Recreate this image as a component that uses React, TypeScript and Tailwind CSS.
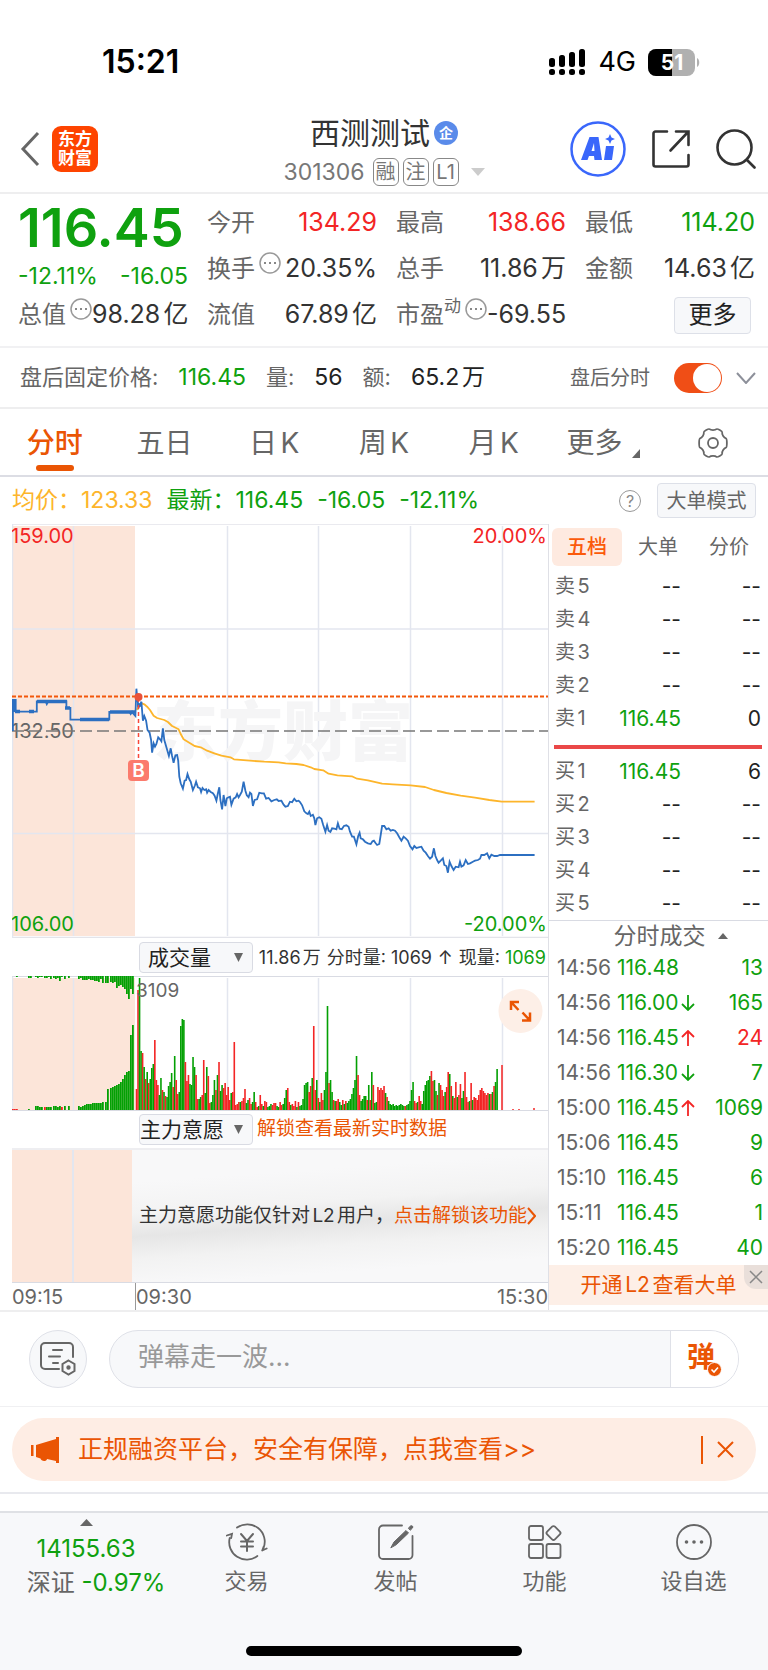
import { useState } from "react";

const GREEN = "#0fa10f";
const RED = "#f32525";

// price samples: x,y pairs
const priceLine =
    "36,663 36,570 44,570 44,605 103,605 103,574 128,574 131,582 135,574 186,574 186,594 197,594 197,629 306,629 306,606 363,606 366,612 370,605 374,612 379,618 382,536 384,560 388,592 392,585 396,575 400,632 404,618 409,632 413,660 419,668 423,690 426,728 430,700 434,710 438,702 443,682 448,688 452,694 456,655 460,690 466,712 473,738 478,715 482,738 486,758 491,736 496,735 499,752 502,800 506,820 512,836 517,812 521,810 525,792 530,808 534,815 540,840 546,826 549,815 554,832 560,835 563,846 567,834 572,840 577,838 580,848 584,840 590,846 596,850 601,857 606,872 610,850 614,832 617,870 622,898 626,855 631,888 635,865 640,862 644,860 648,884 654,866 660,862 664,852 668,862 672,855 677,845 682,815 687,842 691,856 696,862 700,848 704,852 708,888 713,870 720,868 726,848 733,850 739,850 745,866 752,864 760,874 768,870 775,868 780,873 788,872 794,884 799,890 806,888 812,875 818,877 824,866 830,874 836,872 840,876 846,886 852,904 858,910 862,912 866,905 870,918 876,914 880,925 883,945 888,925 894,922 900,926 905,945 911,965 916,945 920,962 925,966 930,955 936,956 942,958 946,940 951,956 957,958 963,948 970,946 976,950 980,965 986,980 991,980 998,1003 1003,978 1007,968 1010,985 1016,988 1022,995 1030,1000 1038,1002 1043,994 1047,992 1052,1000 1056,1005 1062,1002 1066,975 1070,948 1076,948 1082,958 1088,955 1094,962 1100,960 1106,962 1112,970 1118,982 1124,992 1130,980 1136,985 1142,992 1148,1008 1155,1018 1160,1008 1166,1014 1172,1012 1180,1010 1186,1022 1192,1028 1198,1038 1204,1046 1210,1040 1215,1015 1219,1038 1224,1050 1228,1058 1234,1052 1240,1045 1244,1065 1250,1068 1254,1088 1259,1055 1264,1068 1270,1080 1276,1070 1284,1072 1288,1055 1292,1070 1298,1066 1304,1050 1310,1062 1316,1060 1324,1055 1330,1052 1338,1050 1344,1046 1348,1035 1356,1035 1364,1030 1370,1045 1376,1034 1384,1038 1392,1038 1400,1035 1497,1035";

const averageLine =
    "384,600 388,585 397,580 404,583 412,590 420,600 430,617 440,624 460,630 470,636 482,648 500,658 506,672 514,688 530,698 545,708 562,712 580,722 600,730 620,737 645,742 655,748 700,752 740,755 780,757 800,760 830,762 850,765 870,772 880,777 905,781 920,791 945,796 985,799 1000,806 1030,811 1070,821 1100,823 1150,826 1190,831 1215,840 1250,849 1290,857 1330,863 1370,870 1405,875 1497,875";

const toPoints = (raw: string) =>
    raw
        .split(" ")
        .map((p) => {
            const [x, y] = p.split(",").map(Number);
            return `${(x / 2.8 - 12).toFixed(1)},${(y / 3 - 14).toFixed(1)}`;
        })
        .join(" ");

// volume per minute, negative = drawn in red
const volumes = [
    -21, -120, 132, 59, -57, 43, -31, 38, -27, 31, 42, 46, -70, -30, -25, 15, 32, -20, 18, -14,
    13, 24, 28, 37, -23, 54, -30, -16, 18, 84, 91, 90, -48, -29, -35, 26, 25, 53, 43, -35,
    -11, 11, 13, -15, -50, 17, 43, -34, -7, 8, 15, 30, -20, 35, -48, 19, 25, -22, -27, -15,
    -23, -10, 17, -18, -68, -5, -6, -8, 8, -9, -12, -21, 7, 10, -12, -6, 8, 18, -8, -3,
    4, -15, -6, 4, -9, -8, 3, 4, 6, -5, -7, -7, 4, 3, -8, -5, 6, 12, 20, -22,
    -8, 5, -6, -4, -9, 3, -8, 4, 5, 11, 25, 27, 28, -18, -24, 32, -84, -20, 30, -12,
    8, -17, -10, 20, 38, 104, -27, 30, 18, -10, 9, -9, -11, 8, 5, -10, 6, -9, 7, 9,
    11, 16, 22, 30, 54, -35, -15, 9, 11, 14, 14, -10, 25, -10, 38, -25, 7, 8, -23, -20,
    -22, -20, -24, 17, -13, 9, 6, 5, 6, 4, 5, 4, 5, 6, 5, 4, -4, 5, 6, 9,
    20, 28, -9, -7, 8, -14, -9, 6, 19, 25, 29, 30, 34, -39, -29, 30, 19, -15, 27, -25,
    -20, -14, 18, -23, -38, 36, -24, 14, -12, -28, 13, -15, -26, 12, 19, -38, -13, -8, 9, -27,
    10, -13, -12, -10, -15, -20, -22, -19, -17, -15, -17, 16, -16, 18, -24, 28, 41,
];

// call auction: [x, height from the bottom, height from the top]
const auction = [
    [0, -1, 0], [2, -1, 0], [4, -1, 1], [16, 1, 2], [18, 0, 2], [23, 4, 1], [25, 4, 2], [27, 3, 1],
    [29, 3, 1], [32, -3, 2], [34, 3, 2], [36, 3, 1], [38, 3, 3], [41, 4, 2], [43, 4, 3], [45, 3, 2],
    [47, 4, 5], [49, -3, 1], [52, 4, 3], [56, 4, 2], [66, 4, 3], [68, 3, 2], [70, 4, 4], [72, 5, 4],
    [74, 6, 4], [76, 6, 3], [78, 6, 4], [80, 7, 4], [82, 7, 5], [84, 7, 5], [86, 7, 6], [88, 7, 3],
    [90, 8, 7], [93, 8, 7], [95, 21, 7], [98, 22, 6], [100, 23, 7], [102, 24, 6], [104, 25, 12],
    [106, 26, 10], [108, 28, 9], [110, 31, 11], [112, 35, 13], [114, 38, 18], [116, 39, 23],
    [118, 75, 13], [120, 85, 18],
];

const sells = [["卖5", "--", "--"], ["卖4", "--", "--"], ["卖3", "--", "--"], ["卖2", "--", "--"], ["卖1", "116.45", "0"]];
const buys = [["买1", "116.45", "6"], ["买2", "--", "--"], ["买3", "--", "--"], ["买4", "--", "--"], ["买5", "--", "--"]];

const trades = [
    ["14:56", "116.48", "", "13"],
    ["14:56", "116.00", "↓", "165"],
    ["14:56", "116.45", "↑", "24"],
    ["14:56", "116.30", "↓", "7"],
    ["15:00", "116.45", "↑", "1069"],
    ["15:06", "116.45", "", "9"],
    ["15:10", "116.45", "", "6"],
    ["15:11", "116.45", "", "1"],
    ["15:20", "116.45", "", "40"],
];

function StatusBar() {
    return (
        <div className="flex h-24 items-center justify-between pl-[102px] pr-[68px] pt-7">
            <span className="text-[32px] font-semibold text-black">15:21</span>
            <div className="flex items-center gap-3 text-black">
                <svg width="37" height="27" viewBox="0 0 37 27">
                    {[0, 10, 20, 30].map((x, i) => (
                        <g key={x}>
                            <rect x={x} y={[9, 6, 3, 0][i]} width="6" height={[9, 12, 15, 18][i]} rx="2.5" />
                            <rect x={x} y="20" width="6" height="6" rx="2.5" />
                        </g>
                    ))}
                </svg>
                <span className="text-[27px]">4G</span>
                <svg width="52" height="27" viewBox="0 0 52 27">
                    <clipPath id="battery"><rect width="47" height="27" rx="8" /></clipPath>
                    <g clipPath="url(#battery)">
                        <rect width="47" height="27" fill="#b0b0b0" />
                        <rect width="24" height="27" fill="#000" />
                    </g>
                    <path d="M49 9c3 1.5 3 7.500 0 9z" fill="#b0b0b0" />
                    <text x="24" y="21" textAnchor="middle" fontSize="21" fontWeight="700" fill="#fff">51</text>
                </svg>
            </div>
        </div>
    );
}

function Header() {
    return (
        <header className="grid h-[98px] grid-cols-[1fr_auto_1fr] items-center border-b-2 border-[#eeeeef] px-3 pt-2.5">
            <div className="flex items-center gap-3 pl-2">
                <button aria-label="返回">
                    <svg width="20" height="36" viewBox="0 0 20 36" fill="none" stroke="#666" strokeWidth="3">
                        <path d="M18 2 3 18l15 16" />
                    </svg>
                </button>
                <a href="#" className="flex h-[46px] w-[46px] flex-col items-center justify-center rounded-[9px] bg-[#fe4400] text-[17px] font-bold leading-[19px] text-white">
                    <span>东方</span>
                    <span>财富</span>
                </a>
            </div>
            <div className="flex flex-col items-center pt-1.5">
                <div className="flex items-center gap-1">
                    <h1 className="text-[30px] leading-10 text-[#333]">西测测试</h1>
                    <span className="flex h-6 w-6 items-center justify-center rounded-full bg-[#5a8bea] text-sm font-bold text-white">企</span>
                </div>
                <div className="flex items-center gap-1 text-[23px] leading-[38px] text-[#777]">
                    <span className="mr-1">301306</span>
                    {["融", "注", "L1"].map((t) => (
                        <span key={t} className="flex h-7 min-w-[26px] items-center justify-center rounded-md border border-[#888] px-px text-xl">{t}</span>
                    ))}
                    <svg className="ml-2" width="14" height="8" viewBox="0 0 14 8"><path d="M0 0h14L7 8z" fill="#ccc" /></svg>
                </div>
            </div>
            <div className="flex items-center justify-end gap-[26px]">
                <button aria-label="Ai">
                    <svg width="56" height="56" viewBox="0 0 56 56">
                        <circle cx="28" cy="28" r="26.500" fill="#fff" stroke="#3a67fb" strokeWidth="2.5" />
                        <g fill="#3a67fb">
                            <path fillRule="evenodd" d="M19.500 16h9l3.500 23h-7.500l-.5-4h-5l-1.500 4H11zM24 22l-2.500 8h3z" />
                            <path d="M36 25h8l-2 14h-8zM40 13l1.500 3.500L45 18l-3.500 1.500L40 23l-1.500-3.500L35 18l3.500-1.500z" />
                        </g>
                    </svg>
                </button>
                <button aria-label="分享">
                    <svg width="38" height="38" viewBox="0 0 38 38" fill="none" stroke="#333" strokeWidth="2.6" strokeLinecap="round">
                        <path d="M15 1.500H3.500a2 2 0 0 0-2 2v31a2 2 0 0 0 2 2h31a2 2 0 0 0 2-2V25" />
                        <path d="M24 1.500h12.500V15M36 2 18.500 20.500" />
                    </svg>
                </button>
                <button aria-label="搜索">
                    <svg width="40" height="40" viewBox="0 0 40 40" fill="none" stroke="#333" strokeWidth="2.6" strokeLinecap="round">
                        <circle cx="18.500" cy="18.500" r="17" />
                        <path d="m31 31 7.500 7.500" />
                    </svg>
                </button>
            </div>
        </header>
    );
}

function Dots() {
    return (
        <svg className="ml-1 mt-1.5 shrink-0 self-start" width="22" height="22" viewBox="0 0 22 22">
            <circle cx="11" cy="11" r="10" fill="none" stroke="#999" strokeWidth="1.5" />
            <path d="M5 10h2v2H5zM10 10h2v2h-2zM15 10h2v2h-2z" fill="#888" />
        </svg>
    );
}

function Stat({ label, value, color = "text-[#333]", sup = "", dots = false }: { label: string; value: string; color?: string; sup?: string; dots?: boolean }) {
    return (
        <div className="flex h-[46px] items-center">
            <span className="text-2xl text-[#666]">{label}</span>
            {sup && <span className="self-start pt-0.5 text-[17px] text-[#666]">{sup}</span>}
            {dots && <Dots />}
            <span className={`ml-auto ${color}`}>{value}</span>
        </div>
    );
}

function Quote() {
    return (
        <section className="grid grid-cols-4 gap-x-[19px] whitespace-nowrap border-b-2 border-[#f1f1f3] pb-2 pl-[18px] pr-[13px] pt-1.5 text-[25px]">
            <div>
                <div className="flex h-[54px] items-center text-[54px] font-semibold text-[#0fa10f]">116.45</div>
                <div className="flex h-[38px] items-center justify-between pt-1.5 text-[23px] text-[#0fa10f]">
                    <span>-12.11%</span>
                    <span>-16.05</span>
                </div>
                <Stat label="总值" value="98.28亿" dots />
            </div>
            <div>
                <Stat label="今开" value="134.29" color="text-[#f32525]" />
                <Stat label="换手" value="20.35%" dots />
                <Stat label="流值" value="67.89亿" />
            </div>
            <div>
                <Stat label="最高" value="138.66" color="text-[#f32525]" />
                <Stat label="总手" value="11.86万" />
                <Stat label="市盈" value="-69.55" sup="动" dots />
            </div>
            <div>
                <Stat label="最低" value="114.20" color="text-[#0fa10f]" />
                <Stat label="金额" value="14.63亿" />
                <div className="flex h-[46px] items-center justify-end pr-1">
                    <button className="flex h-[37px] w-[77px] items-center justify-center rounded border border-[#dde0e8] bg-[#f7f8fa] text-2xl text-[#222]">更多</button>
                </div>
            </div>
        </section>
    );
}

function AfterHours() {
    const [on, setOn] = useState(true);
    return (
        <section className="flex h-[61px] items-center border-b-2 border-[#eeeeef] pl-5 pr-3 text-[23px] text-[#222]">
            <span className="text-[22px] text-[#666]">盘后固定价格:</span>
            <span className="ml-5 text-[#0fa10f]">116.45</span>
            <span className="ml-5 text-[22px] text-[#666]">量:</span>
            <span className="ml-5">56</span>
            <span className="ml-5 text-[22px] text-[#666]">额:</span>
            <span className="ml-5">65.2万</span>
            <label htmlFor="after" className="ml-auto text-xl text-[#666]">盘后分时</label>
            <input
                id="after"
                type="checkbox"
                checked={on}
                onChange={() => setOn(!on)}
                className="ml-6 flex h-[30px] w-12 appearance-none items-center rounded-full bg-[#f04e16] px-px before:h-7 before:w-7 before:rounded-full before:bg-white checked:justify-end"
            />
            <button aria-label="展开" className="ml-3.5">
                <svg width="20" height="12" viewBox="0 0 20 12" fill="none" stroke="#8d909a" strokeWidth="2"><path d="m1 1 9 10 9-10" /></svg>
            </button>
        </section>
    );
}

function Gear() {
    return (
        <svg width="32" height="32" viewBox="0 0 32 32" fill="none" stroke="#666" strokeWidth="1.8" strokeLinejoin="round">
            <path d="M12.500 2.200c1.200 1.200 5.800 1.200 7 0 .8-.8 6 2 5.700 3.300-.4 1.900 1.700 5.300 3.700 5.800 1.300.4 1.300 9 0 9.400-2 .5-4.100 3.900-3.700 5.800.3 1.300-4.900 4.100-5.700 3.300-1.200-1.200-5.800-1.200-7 0-.8.8-6-2-5.700-3.300.4-1.900-1.700-5.300-3.700-5.800-1.300-.4-1.300-9 0-9.400 2-.5 4.100-3.900 3.700-5.800-.3-1.300 4.900-4.100 5.700-3.300z" />
            <circle cx="16" cy="16" r="5" />
        </svg>
    );
}

function Tabs() {
    const tab = "relative flex items-center justify-center pt-0.5";
    return (
        <nav className="grid h-[68px] grid-cols-7 border-b-2 border-[#dcdde4] text-[28px] text-[#666]">
            <button className={`${tab} font-medium text-[#ea5504]`}>
                分时
                <span className="absolute bottom-1 h-1.5 w-[38px] rounded-full bg-[#ea5504]" />
            </button>
            <button className={tab}>五日</button>
            <button className={tab}>日K</button>
            <button className={tab}>周K</button>
            <button className={tab}>月K</button>
            <button className={tab}>
                更多
                <svg className="ml-2.5 mt-5" width="8" height="9" viewBox="0 0 8 9"><path d="M8 0v9H0z" fill="#666" /></svg>
            </button>
            <button className={tab} aria-label="设置"><Gear /></button>
        </nav>
    );
}

function PriceChart() {
    return (
        <svg className="block w-full" viewBox="0 0 536 414" fontSize="20">
            <rect x="0" y="2" width="123" height="410" fill="#fce5d9" />
            <path d="M0 0h536M0 413.500h536" stroke="#e3e4ea" strokeWidth="1.5" />
            <path d="M.5 0v414M61.500 2v410M215.500 2v410M306.500 2v410M398.500 2v410M490.500 2v410M0 105h536M0 309.500h536" stroke="#e3e6ef" strokeWidth="1.5" />
            <text x="141" y="231" fontSize="65" fontWeight="900" fill="#f5f5f6">东方财富</text>
            <text x="-1" y="19" fill={RED}>159.00</text>
            <text x="535" y="19" fill={RED} textAnchor="end">20.00%</text>
            <text x="-1" y="214" fill="#666">132.50</text>
            <text x="-1" y="407" fill={GREEN}>106.00</text>
            <text x="535" y="407" fill={GREEN} textAnchor="end">-20.00%</text>
            <path d="M0 207h536" stroke="#777" strokeWidth="1.5" strokeDasharray="12 5" />
            <path d="M0 172.500h536" stroke="#f2570a" strokeWidth="2" strokeDasharray="4 2" />
            <polyline points={toPoints(averageLine)} fill="none" stroke="#fdb52b" strokeWidth="1.8" strokeLinejoin="round" />
            <polyline points={toPoints(priceLine)} fill="none" stroke="#2c6fc1" strokeWidth="1.8" />
            <path d="M2 176v12M3 187.500h5M17 187.500h5M25 177.500h30M68 195.500h29M98 188h25M125 181h5M53 184h5" stroke="#2c6fc1" strokeWidth="3.5" />
            <path d="M126.500 174v66" stroke="#f9483a" strokeWidth="1.5" strokeDasharray="4 3" />
            <circle cx="126.500" cy="173" r="4" fill="#e9523a" />
            <rect x="116" y="236" width="21" height="21" rx="4" fill="#fb7b6d" />
            <text x="126.500" y="253" fill="#fff" fontSize="19" fontWeight="600" textAnchor="middle">B</text>
        </svg>
    );
}

function VolumeChart() {
    return (
        <svg className="block w-full" viewBox="0 0 536 135" fontSize="19">
            <rect x="0" y="2" width="123" height="132" fill="#fce5d9" />
            <path d="M.5 0v134M61.500 2v132M215.500 2v132M306.500 2v132M398.500 2v132M490.500 2v132" stroke="#e3e6ef" strokeWidth="1.5" />
            <path d="M0 .5h536M0 134.500h536" stroke="#d9dbe3" />
            {auction.map(([x, low, top]) => (
                <g key={x}>
                    <rect x={x} y={134 - Math.abs(low)} width="1.8" height={Math.abs(low)} fill={low < 0 ? RED : "#03a003"} />
                    <rect x={x} y="0" width="1.8" height={top} fill="#03a003" />
                </g>
            ))}
            {volumes.map((v, i) => (
                <rect key={i} x={123.700 + i * 1.528} y={134 - Math.abs(v)} width="1.6" height={Math.abs(v)} fill={v < 0 ? RED : "#03a003"} />
            ))}
            <path d="M490 134V89M501 134v-1M507 134v-1M522 134v-2" stroke={RED} strokeWidth="1.5" />
            <text x="124" y="21" fill="#666">3109</text>
            <circle cx="508.500" cy="35" r="22" fill="#fdefe7" />
            <g fill="none" stroke="#ea5504" strokeWidth="2.5">
                <path d="M499 34v-8h8M499.500 26.500l7 7.500M518 36.500v8h-8M517.500 44l-7-7.500" />
            </g>
        </svg>
    );
}

function Indicator({ name, pad }: { name: string; pad: string }) {
    return (
        <div className="relative">
            <select aria-label={name} className={`block h-[31px] w-[114px] appearance-none rounded border border-[#d9dbe3] bg-[#f7f8fa] text-[21px] leading-[29px] text-[#222] ${pad}`}>
                <option>{name}</option>
            </select>
            <svg className="pointer-events-none absolute right-2.5 top-[11px]" width="9" height="9" viewBox="0 0 9 9"><path d="M0 0h9L4.500 9z" fill="#666" /></svg>
        </div>
    );
}

function Charts() {
    return (
        <div className="min-w-0 flex-1 border-r border-[#dfe0e6] pl-3">
            <PriceChart />
            <div className="flex h-[38px] items-center justify-between whitespace-nowrap pl-[127px] pr-0.5 text-[18px] text-[#333]">
                <Indicator name="成交量" pad="pl-2" />
                <span>11.86万</span>
                <span>分时量: 1069</span>
                <span>↑</span>
                <span>现量: <span className="text-[#0fa10f]">1069</span></span>
            </div>
            <VolumeChart />
            <div className="flex h-[37px] items-center gap-1 whitespace-nowrap pl-[127px]">
                <Indicator name="主力意愿" pad="pl-0" />
                <a href="#" className="text-[19px] text-[#ea5504]">解锁查看最新实时数据</a>
            </div>
            <div className="flex h-[135px] border-b border-t-2 border-b-[#d9dbe3] border-t-[#eeeef1]">
                <div className="h-full w-[62px] shrink-0 border-r-2 border-[#e3e6ef] bg-[#fce5d9]" />
                <div className="h-full w-[58px] shrink-0 bg-[#fce5d9]" />
                <div className="flex flex-1 items-center whitespace-nowrap bg-[linear-gradient(176deg,#f8f8f9_20%,#f3f3f3_40%,#e6e6e6_54%,#f2f2f2_68%,#f8f8f9_85%)] pl-[7px] text-[19px] text-[#333]">
                    主力意愿功能仅针对L2用户，
                    <a href="#" className="flex items-center text-[#ea5504]">
                        点击解锁该功能
                        <svg width="9" height="18" viewBox="0 0 9 18" fill="none" stroke="#ea5504" strokeWidth="2"><path d="m1 1 7 8-7 8" /></svg>
                    </a>
                </div>
            </div>
            <div className="flex h-[27px] text-xl leading-[29px] text-[#666]">
                <span className="w-[123px]">09:15</span>
                <span className="border-l border-[#999]">09:30</span>
                <span className="ml-auto">15:30</span>
            </div>
        </div>
    );
}

function Levels({ rows }: { rows: string[][] }) {
    return (
        <table className="w-full text-[21px] leading-[33px]">
            <tbody>
                {rows.map(([name, price, count]) => (
                    <tr key={name} className="h-[33px]">
                        <td className="w-[54px] p-0 pl-1.5 text-xl leading-[33px] text-[#666]">{name}</td>
                        <td className={`w-[78px] p-0 text-right ${price === "--" ? "text-[#222]" : "text-[#0fa10f]"}`}>{price}</td>
                        <td className="p-0 pr-[7px] text-right text-[#222]">{count}</td>
                    </tr>
                ))}
            </tbody>
        </table>
    );
}

function OrderBook() {
    return (
        <div className="w-[219px] shrink-0">
            <div className="flex pl-[3px] pt-1 text-xl text-[#666]">
                <button className="h-[38px] w-[70px] rounded-md bg-[#feeae0] font-medium text-[#fb5a0a]">五档</button>
                <button className="h-[38px] w-[72px]">大单</button>
                <button className="h-[38px] w-[70px]">分价</button>
            </div>
            <div className="pt-1"><Levels rows={sells} /></div>
            <div className="mb-1.5 ml-[5px] mr-1.5 mt-2.5 h-1 bg-[#ea4848]" />
            <Levels rows={buys} />
            <button className="flex h-[30px] w-full items-center justify-center gap-3 border-t border-[#d9dbe3] pl-6 text-[23px] leading-7 text-[#666]">
                分时成交
                <svg width="10" height="6" viewBox="0 0 10 6"><path d="M5 0l5 6H0z" fill="#666" /></svg>
            </button>
            <table className="w-full text-[21px] leading-[35px]">
                <tbody>
                    {trades.map(([time, price, arrow, count], i) => (
                        <tr key={i} className="h-[35px]">
                            <td className="w-[68px] p-0 pl-2 text-[#666]">{time}</td>
                            <td className="w-[64px] p-0 text-[#0fa10f]">{price}</td>
                            <td className={`w-4 p-0 ${arrow === "↑" ? "text-[#f32525]" : "text-[#0fa10f]"}`}>
                                {arrow && (
                                    <svg width="14" height="16" viewBox="0 0 14 16" fill="none" stroke="currentColor" strokeWidth="1.8">
                                        <path d={arrow === "↑" ? "M7 16V1M1 7l6-6 6 6" : "M7 0v15M1 9l6 6 6-6"} />
                                    </svg>
                                )}
                            </td>
                            <td className={`p-0 pr-[5px] text-right ${count === "24" ? "text-[#f32525]" : "text-[#0fa10f]"}`}>{count}</td>
                        </tr>
                    ))}
                </tbody>
            </table>
            <div className="relative h-10 bg-[#fdefe7]">
                <a href="#" className="flex h-full items-center justify-center text-[21px] text-[#ea5504]">开通L2查看大单</a>
                <button aria-label="关闭" className="absolute right-0 top-0 flex h-6 w-6 items-center justify-center rounded-bl-xl bg-[#e9dfda]">
                    <svg width="14" height="14" viewBox="0 0 14 14" stroke="#888" strokeWidth="1.5"><path d="m1 1 12 12M13 1 1 13" /></svg>
                </button>
            </div>
        </div>
    );
}

function Danmu() {
    return (
        <div className="flex items-center border-b border-[#f0f0f2] px-[29px] py-[18px]">
            <button aria-label="弹幕设置" className="flex h-[58px] w-[58px] shrink-0 items-center justify-center rounded-full border border-[#dfe1e8] bg-[#f7f8fa]">
                <svg width="36" height="34" viewBox="0 0 36 34" fill="none" stroke="#666" strokeWidth="2">
                    <path d="M19 27H5a4 4 0 0 1-4-4V5a4 4 0 0 1 4-4h24a4 4 0 0 1 4 4v10M13 8h9M9 14.500h11M13 21h5" strokeLinecap="round" />
                    <path d="m28.500 18.500 6 3.500v7l-6 3.500-6-3.500v-7z" />
                    <circle cx="28.500" cy="25.500" r="1.200" fill="#666" />
                </svg>
            </button>
            <div className="ml-[22px] flex h-[58px] flex-1 overflow-hidden rounded-full border border-[#dfe1e8] bg-[#f7f8fa]">
                <input aria-label="弹幕" placeholder="弹幕走一波..." className="min-w-0 flex-1 pb-1.5 pl-7 text-[26px] placeholder:text-[#999]" />
                <button aria-label="发送" className="relative flex w-[68px] items-center border-l border-[#dfe1e8] bg-white pb-1 pl-4 text-[28px] font-bold text-[#ea5504]">
                    弹
                    <svg className="absolute bottom-2.5 right-4" width="15" height="15" viewBox="0 0 15 15">
                        <circle cx="7.500" cy="7.500" r="7" fill="#ea5504" stroke="#fff" />
                        <path d="m4.500 7.500 2.500 2.500 4-4.500" fill="none" stroke="#fff" strokeWidth="1.6" />
                    </svg>
                </button>
            </div>
        </div>
    );
}

function Promo() {
    return (
        <div className="border-b-2 border-[#e8e9ee] px-3 py-[11px]">
            <div className="flex h-[63px] items-center rounded-full bg-[#feede4] pl-[18px] pr-[22px] text-[#ea5504]">
                <svg width="30" height="26" viewBox="0 0 30 26" fill="#ea5504">
                    <path d="M1 8h2.500v11H1zM6 8l20-6V0h3v26h-3v-2l-9-2c-.5 3-6 2.500-6.500-.5L6 20z" />
                </svg>
                <a href="#" className="ml-[18px] text-[25px]">正规融资平台，安全有保障，点我查看&gt;&gt;</a>
                <span className="ml-auto h-7 w-0.5 bg-[#ea5504]" />
                <button aria-label="关闭" className="ml-3.5">
                    <svg width="17" height="17" viewBox="0 0 17 17" stroke="#ea5504" strokeWidth="2"><path d="m1 1 15 15M16 1 1 16" /></svg>
                </button>
            </div>
        </div>
    );
}

function BottomBar() {
    const item = "flex flex-col items-center gap-1 pt-2.5 text-[22px] leading-8";
    return (
        <footer className="border-t-2 border-[#dfe1e5] bg-[#f7f8fa] pb-4">
            <div className="grid grid-cols-[172px_1fr_1fr_1fr_1fr] text-[#666]">
                <button className="flex flex-col items-center whitespace-nowrap pt-1.5 text-2xl leading-[34px]">
                    <svg width="13" height="7" viewBox="0 0 13 7"><path d="m6.500 0 6.500 7H0z" fill="#666" /></svg>
                    <span className="pt-1.5 text-[#0fa10f]">14155.63</span>
                    <span className="pl-5">深证 <span className="text-[#0fa10f]">-0.97%</span></span>
                </button>
                <button className={item}>
                    <svg width="42" height="38" viewBox="0 0 42 38" fill="none" stroke="#666" strokeWidth="1.8" strokeLinecap="round">
                        <path d="M11 4.600A17.500 17.500 0 0 1 37.400 25.500M31.400 33A17.500 17.500 0 0 1 3.700 15M.8 12.500 6 10.800l-.8 4.200M36.200 27.500l4.500-2M36.200 27.500l1.500-4" />
                        <path d="m15 11 6 7 6-7M21 18v10M15 18.500h12M15 23.500h12" strokeWidth="2" />
                    </svg>
                    交易
                </button>
                <button className={item}>
                    <svg width="36" height="38" viewBox="0 0 36 38" fill="none" stroke="#666" strokeWidth="1.8" strokeLinecap="round">
                        <path d="M24 2.500H5a4 4 0 0 0-4 4V32a4 4 0 0 0 4 4h25.500a4 4 0 0 0 4-4V13" />
                        <path d="M13 24.500 16 19 28 7.500l2.500 2.500L18.500 21.500zM30.500 5l2-2c1.500-1 3 .5 2 2l-2 2z" fill="#666" strokeWidth="1" />
                    </svg>
                    发帖
                </button>
                <button className={item}>
                    <svg width="36" height="38" viewBox="0 0 36 38" fill="none" stroke="#666" strokeWidth="1.800">
                        <rect x="2" y="3" width="14" height="14" rx="2" />
                        <rect x="2" y="21" width="14" height="14" rx="2" />
                        <rect x="19.500" y="21" width="14" height="14" rx="2" />
                        <rect x="21" y="4.500" width="11" height="11" rx="2" transform="rotate(45 26.500 10)" />
                    </svg>
                    功能
                </button>
                <button className={item}>
                    <svg width="36" height="38" viewBox="0 0 36 38">
                        <circle cx="18" cy="19" r="17" fill="none" stroke="#666" strokeWidth="1.800" />
                        <g fill="#666"><circle cx="10.500" cy="19" r="1.800" /><circle cx="18" cy="19" r="1.800" /><circle cx="25.500" cy="19" r="1.800" /></g>
                    </svg>
                    设自选
                </button>
            </div>
            <div className="mx-auto mt-[46px] h-2.5 w-[276px] rounded-full bg-black" />
        </footer>
    );
}

export default function App() {
    return (
        <div className="min-h-screen bg-white font-['Inter','Noto_Sans_CJK_SC',sans-serif] leading-normal [text-autospace:normal]">
            <StatusBar />
            <Header />
            <Quote />
            <AfterHours />
            <Tabs />
            <div className="flex h-[47px] items-center whitespace-nowrap px-3 text-[23px] text-[#0fa10f]">
                <span className="text-[#fdb52b]">均价：123.33</span>
                <span className="ml-3.5">最新：116.45</span>
                <span className="ml-3.5">-16.05</span>
                <span className="ml-3.5">-12.11%</span>
                <button aria-label="说明" className="ml-auto flex h-[22px] w-[22px] items-center justify-center rounded-full border border-[#999] text-base text-[#888]">?</button>
                <button className="ml-4 h-[35px] w-[99px] rounded border border-[#dde0e8] bg-[#f7f8fa] text-xl text-[#666]">大单模式</button>
            </div>
            <div className="flex border-b-2 border-[#eeeeef]">
                <Charts />
                <OrderBook />
            </div>
            <Danmu />
            <Promo />
            <div className="h-[17px]" />
            <BottomBar />
        </div>
    );
}
